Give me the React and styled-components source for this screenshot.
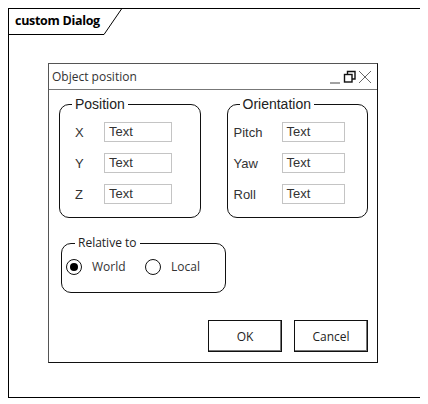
import React from 'react';
import styled, { createGlobalStyle } from 'styled-components';

const GlobalStyle = createGlobalStyle`
  body {
    margin: 8px;
    background: #fff;
    font-family: 'Liberation Sans', Arial, sans-serif;
  }
`;

const Frame = styled.div`
  width: 413px;
  height: 390px;
  box-sizing: border-box;
  border: 1px solid #000;
  background: #fff;
`;

const TabRow = styled.div`
  display: flex;
  height: 26px;
`;

const TabLabel = styled.div`
  width: 95px;
  box-sizing: border-box;
  border-bottom: 1px solid #000;
  padding-left: 6px;
  white-space: nowrap;
  font-family: 'Open Sans', 'Noto Sans', sans-serif;
  font-weight: 700;
  font-size: 12.5px;
  letter-spacing: -0.3px;
  line-height: 24px;
  color: #000;
`;

const Dialog = styled.div`
  margin: 28px 0 0 39px;
  width: 330px;
  height: 300px;
  box-sizing: border-box;
  border: 1px solid #555;
  border-right-color: #111;
  border-bottom-color: #111;
  display: flex;
  flex-direction: column;
`;

const TitleBar = styled.div`
  height: 26px;
  box-sizing: border-box;
  border-bottom: 1px solid #777;
  display: flex;
  align-items: center;
  justify-content: space-between;
  padding: 0 5px 0 3px;
  font-family: 'Open Sans', 'Noto Sans', sans-serif;
  font-size: 12px;
  color: #333;
`;

const Body = styled.div`
  flex: 1;
  display: flex;
  flex-direction: column;
  padding: 6px 9px 10px 10px;
`;

const GroupRow = styled.div`
  display: flex;
  gap: 26px;
`;

const Group = styled.fieldset`
  margin: ${p => p.$margin || '0'};
  width: ${p => p.$width}px;
  box-sizing: border-box;
  min-width: 0;
  padding: ${p => p.$padding};
  border: 1.5px solid #111;
  border-radius: 10px;
`;

const Legend = styled.legend`
  margin-left: ${p => p.$offset}px;
  padding: 0 3px;
  font-family: ${p => (p.$ui ? "'Open Sans', 'Noto Sans', sans-serif" : "'Liberation Sans', Arial, sans-serif")};
  font-size: ${p => (p.$ui ? 12 : 14)}px;
  line-height: 16px;
  color: #222;
`;

const Fields = styled.div`
  display: grid;
  grid-template-columns: ${p => p.$label}px ${p => p.$input}px;
  row-gap: 11px;
  align-items: center;
  padding-left: ${p => p.$inset}px;
`;

const Label = styled.span`
  font-size: 13px;
  color: #333;
`;

const Input = styled.div`
  height: 20px;
  box-sizing: border-box;
  border: 1px solid #c4c4c4;
  padding-left: 4px;
  font-size: 13px;
  line-height: 18px;
  color: #333;
`;

const Radios = styled.div`
  display: flex;
  align-items: center;
  padding-left: 4px;
`;

const RadioItem = styled.div`
  display: flex;
  align-items: center;
  gap: 10px;
  width: ${p => p.$width}px;
  font-family: 'Open Sans', 'Noto Sans', sans-serif;
  font-size: 12px;
  color: #333;
`;

const Circle = styled.span`
  width: 16px;
  height: 16px;
  box-sizing: border-box;
  border: 1.5px solid #111;
  border-radius: 50%;
  display: flex;
  align-items: center;
  justify-content: center;

  &::after {
    content: '';
    display: ${p => (p.$checked ? 'block' : 'none')};
    width: 8px;
    height: 8px;
    border-radius: 50%;
    background: #000;
  }
`;

const Buttons = styled.div`
  margin-top: auto;
  display: flex;
  justify-content: flex-end;
  gap: 12px;
`;

const Button = styled.div`
  width: 74px;
  height: 32px;
  box-sizing: border-box;
  border: 1px solid #111;
  box-shadow: inset -1px -1px 0 #777;
  display: flex;
  align-items: center;
  justify-content: center;
  font-family: 'Open Sans', 'Noto Sans', sans-serif;
  font-size: 12px;
  color: #222;
`;

const WindowControls = () => (
  <svg width="42" height="14" viewBox="0 0 42 14">
    <line x1="0" y1="13" x2="10" y2="13" stroke="#444" strokeWidth="1" />
    <rect x="14.5" y="4.5" width="7.5" height="7.5" fill="none" stroke="#111" strokeWidth="1.4" />
    <path d="M17.5 4.5 V1.5 H25 V9 H22" fill="none" stroke="#111" strokeWidth="1.4" />
    <line x1="29" y1="1" x2="41" y2="13" stroke="#666" strokeWidth="1" />
    <line x1="41" y1="1" x2="29" y2="13" stroke="#666" strokeWidth="1" />
  </svg>
);

const FieldGroup = ({ title, rows, label, input, inset, width }) => (
  <Group $width={width} $padding="10px 0 13px 0">
    <Legend $offset={12}>{title}</Legend>
    <Fields $label={label} $input={input} $inset={inset}>
      {rows.map(r => (
        <React.Fragment key={r}>
          <Label>{r}</Label>
          <Input>Text</Input>
        </React.Fragment>
      ))}
    </Fields>
  </Group>
);

export default function App() {
  return (
    <>
      <GlobalStyle />
      <Frame>
        <TabRow>
          <TabLabel>custom Dialog</TabLabel>
          <svg width="18" height="26" viewBox="0 0 18 26">
            <line x1="0" y1="25.5" x2="17.5" y2="0" stroke="#000" strokeWidth="1" />
          </svg>
        </TabRow>
        <Dialog>
          <TitleBar>
            <span>Object position</span>
            <WindowControls />
          </TitleBar>
          <Body>
            <GroupRow>
              <FieldGroup
                title="Position"
                rows={['X', 'Y', 'Z']}
                label={29}
                input={68}
                width={142}
                inset={15}
              />
              <FieldGroup
                title="Orientation"
                rows={['Pitch', 'Yaw', 'Roll']}
                label={48}
                input={63}
                width={142}
                inset={6}
              />
            </GroupRow>
            <Group $width={165} $margin="17px 0 0 2px" $padding="7px 0 17px 0">
              <Legend $offset={13} $ui>Relative to</Legend>
              <Radios>
                <RadioItem $width={79}>
                  <Circle $checked />
                  World
                </RadioItem>
                <RadioItem>
                  <Circle />
                  Local
                </RadioItem>
              </Radios>
            </Group>
            <Buttons>
              <Button>OK</Button>
              <Button>Cancel</Button>
            </Buttons>
          </Body>
        </Dialog>
      </Frame>
    </>
  );
}
